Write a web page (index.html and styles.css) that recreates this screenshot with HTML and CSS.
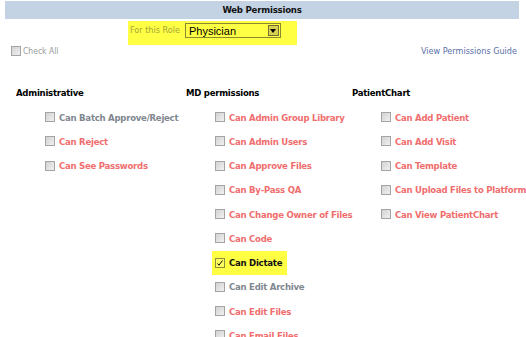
FILE: index.html
```html
<!DOCTYPE html>
<html>
<head>
<meta charset="utf-8">
<link rel="stylesheet" href="styles.css">
</head>
<body>
<div class="page">
  <div class="titlebar">Web Permissions</div>
  <div class="role-row">
    <div class="role-hl">
      <span class="role-label">For this Role</span>
      <span class="select"><span class="sel-text">Physician</span><span class="sel-btn"><svg width="6" height="4" viewBox="0 0 6 4"><path d="M0 0H6L3 4Z" fill="#000"/></svg></span></span>
    </div>
  </div>
  <div class="top-row">
    <label class="checkall"><span class="cb"></span>Check All</label>
    <span class="guide">View Permissions Guide</span>
  </div>
  <div class="cols">
    <div class="col col-admin">
      <div class="col-head">Administrative</div>
      <div class="item gray"><span class="cb"></span>Can Batch Approve/Reject</div>
      <div class="item"><span class="cb"></span>Can Reject</div>
      <div class="item"><span class="cb"></span>Can See Passwords</div>
    </div>
    <div class="col col-md">
      <div class="col-head">MD permissions</div>
      <div class="item"><span class="cb"></span>Can Admin Group Library</div>
      <div class="item"><span class="cb"></span>Can Admin Users</div>
      <div class="item"><span class="cb"></span>Can Approve Files</div>
      <div class="item"><span class="cb"></span>Can By-Pass QA</div>
      <div class="item"><span class="cb"></span>Can Change Owner of Files</div>
      <div class="item"><span class="cb"></span>Can Code</div>
      <div class="item"><span class="hl"><span class="cb checked"><svg width="8" height="8" viewBox="0 0 8 8"><path d="M1.5 4.5L3 6.2L6.5 1.5" fill="none" stroke="#000" stroke-width="1"/></svg></span><span class="dark">Can Dictate</span></span></div>
      <div class="item gray"><span class="cb"></span>Can Edit Archive</div>
      <div class="item"><span class="cb"></span>Can Edit Files</div>
      <div class="item"><span class="cb"></span>Can Email Files</div>
    </div>
    <div class="col col-pc">
      <div class="col-head">PatientChart</div>
      <div class="item"><span class="cb"></span>Can Add Patient</div>
      <div class="item"><span class="cb"></span>Can Add Visit</div>
      <div class="item"><span class="cb"></span>Can Template</div>
      <div class="item"><span class="cb"></span>Can Upload Files to Platform</div>
      <div class="item"><span class="cb"></span>Can View PatientChart</div>
    </div>
  </div>
</div>
</body>
</html>
```
FILE: styles.css
```css
html, body {
  margin: 0;
  padding: 0;
  background: #fff;
  overflow: hidden;
}
body {
  font-family: "DejaVu Sans Condensed", "DejaVu Sans", sans-serif;
  font-size: 9px;
  width: 526px;
  height: 337px;
}
.page {
  position: relative;
}
.titlebar {
  margin: 1px 7px 0 5px;
  height: 18px;
  line-height: 18px;
  background: #c3d3e3;
  text-align: center;
  font-weight: bold;
  color: #111;
  font-size: 9.5px;
  letter-spacing: -0.2px;
}
.role-row {
  padding-left: 128px;
  padding-top: 2px;
}
.role-hl {
  width: 169px;
  height: 24px;
  background: #ffff44;
  display: flex;
  align-items: flex-start;
  padding-top: 2px;
  box-sizing: border-box;
}
.role-label {
  color: #a5a53a;
  margin-left: 2px;
  margin-top: 2px;
  font-weight: normal;
}
.select {
  margin-left: 5px;
  width: 96px;
  height: 15px;
  box-sizing: border-box;
  border: 1px solid #8a8a30;
  display: flex;
  align-items: center;
  justify-content: space-between;
  background: #ffff44;
}
.sel-text {
  font-family: "Liberation Sans", Arial, sans-serif;
  font-size: 11px;
  color: #000;
  padding-left: 3px;
}
.sel-btn {
  width: 11px;
  height: 11px;
  margin-right: 1px;
  box-sizing: border-box;
  border: 1px solid #707030;
  background: #d8d050;
  display: flex;
  align-items: center;
  justify-content: center;
}
.top-row {
  display: flex;
  justify-content: space-between;
  align-items: center;
  padding: 0 9px 0 11px;
  height: 12px;
  margin-top: 0;
}
.checkall {
  display: flex;
  align-items: center;
  color: #999;
  font-size: 8.5px;
}
.checkall .cb {
  margin-right: 2px;
}
.guide {
  color: #5a70a8;
}
.cols {
  display: grid;
  grid-template-columns: 170px 166px 1fr;
  padding-left: 16px;
  margin-top: 29px;
}
.col-head {
  font-weight: bold;
  color: #000;
  height: 13px;
  line-height: 13px;
  margin-bottom: 6px;
  font-size: 9.5px;
  letter-spacing: -0.25px;
}
.item {
  display: flex;
  align-items: center;
  height: 24.25px;
  padding-left: 29px;
  font-weight: bold;
  font-size: 9.5px;
  letter-spacing: -0.25px;
  color: #f06e6e;
  white-space: nowrap;
}
.item.gray {
  color: #7f8790;
}
.item .cb {
  margin-right: 4px;
}
.cb {
  display: inline-flex;
  align-items: center;
  justify-content: center;
  width: 10px;
  height: 10px;
  box-sizing: border-box;
  border: 1px solid #a4a4a4;
  background: linear-gradient(135deg, #d2d2d2, #f0f0f0);
  flex: none;
}
.cb.checked {
  background: #ffff60;
  border-color: #8c8c40;
}
.hl {
  display: inline-flex;
  align-items: center;
  background: #ffff44;
  height: 24px;
  margin-left: -3px;
  padding-left: 3px;
  padding-right: 5px;
}
.dark {
  color: #111;
}
```
